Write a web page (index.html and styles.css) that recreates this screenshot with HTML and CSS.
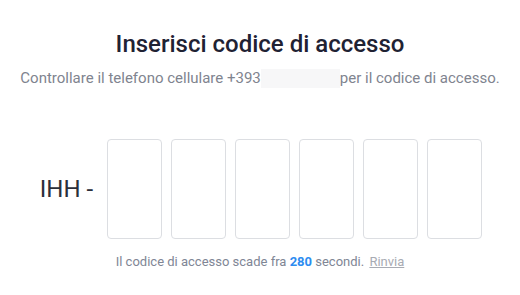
FILE: index.html
```html
<!DOCTYPE html>
<html lang="it">
<head>
<meta charset="utf-8">
<title>Inserisci codice di accesso</title>
<link rel="stylesheet" href="styles.css">
</head>
<body>
<main class="verify">
  <h1 class="title">Inserisci codice di accesso</h1>
  <p class="subtitle">Controllare il telefono cellulare +393<span class="masked"></span>per il codice di accesso.</p>
  <div class="code-row">
    <span class="prefix">IHH -</span>
    <div class="boxes">
      <input class="digit" type="text" maxlength="1">
      <input class="digit" type="text" maxlength="1">
      <input class="digit" type="text" maxlength="1">
      <input class="digit" type="text" maxlength="1">
      <input class="digit" type="text" maxlength="1">
      <input class="digit" type="text" maxlength="1">
    </div>
  </div>
  <p class="expiry">Il codice di accesso scade fra <strong class="count">280</strong> secondi. <a class="resend" href="#">Rinvia</a></p>
</main>
</body>
</html>
```

FILE: styles.css
```css
html, body {
  margin: 0;
  padding: 0;
  background: #ffffff;
}

body {
  font-family: Roboto, "Liberation Sans", Arial, sans-serif;
  width: 520px;
  height: 295px;
  overflow: hidden;
}

.verify {
  display: flex;
  flex-direction: column;
  align-items: center;
  padding-top: 30px;
}

.title {
  margin: 0;
  font-size: 24px;
  line-height: 28px;
  font-weight: 500;
  color: #1f2233;
}

.subtitle {
  margin: 10px 0 0;
  font-size: 15px;
  line-height: 20px;
  color: #80848f;
  display: flex;
  align-items: center;
  white-space: nowrap;
}

.masked {
  display: inline-block;
  width: 79px;
  height: 19px;
  background: #f7f7f8;
}

.code-row {
  display: flex;
  align-items: center;
  margin-top: 51px;
  margin-left: 2px;
}

.prefix {
  font-size: 24px;
  color: #2b2f3a;
  margin-right: 14px;
  white-space: nowrap;
}

.boxes {
  display: flex;
  gap: 9px;
}

.digit {
  box-sizing: border-box;
  width: 55px;
  height: 100px;
  margin: 0;
  padding: 0;
  border: 1px solid #dcdee2;
  border-radius: 4px;
  background: #fff;
  outline: none;
  font-family: inherit;
  font-size: 32px;
  text-align: center;
}

.expiry {
  margin: 14px 0 0;
  font-size: 13px;
  line-height: 17px;
  color: #808695;
}

.count {
  color: #2d8cf0;
  font-weight: 700;
}

.resend {
  color: #a8abb3;
  text-decoration: underline;
  margin-left: 2px;
}
```
